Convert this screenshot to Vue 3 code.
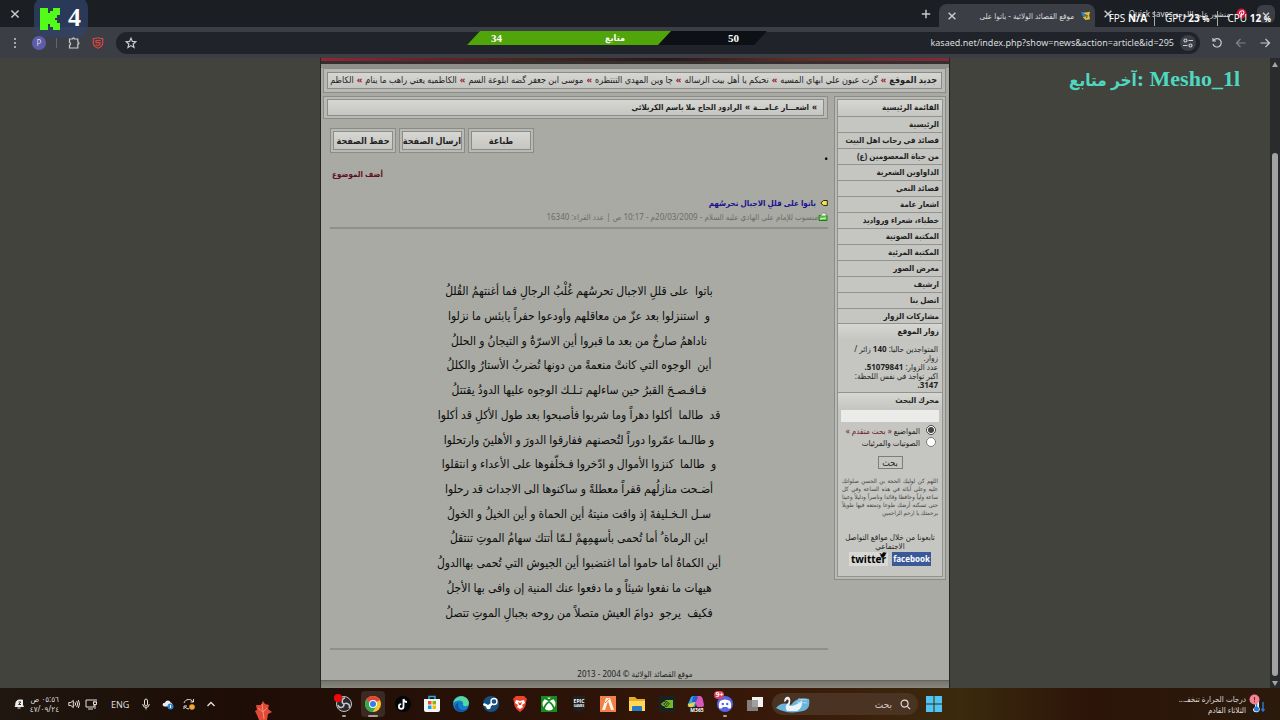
<template>
  <div class="desktop">
    <header class="browser">
      <div class="tab-bar">
        <button class="icon-btn window-close" aria-label="إغلاق النافذة">
          <svg viewBox="0 0 10 10"><path d="M2 2l6 6M8 2l-6 6" /></svg>
        </button>
        <button class="icon-btn new-tab" aria-label="علامة تبويب جديدة">
          <svg viewBox="0 0 10 10"><path d="M5 1.5v7M1.5 5h7" /></svg>
        </button>
        <div class="tab active">
          <button class="icon-btn" aria-label="إغلاق">
            <svg viewBox="0 0 10 10"><path d="M2.2 2.2l5.6 5.6M7.8 2.2l-5.6 5.6" /></svg>
          </button>
          <span class="tab-title" dir="rtl">موقع القصائد الولائية - باتوا على</span>
          <svg class="favicon" viewBox="0 0 12 12">
            <path d="M1 2l5 1 1 5-4-1z" fill="#2a84c8" />
            <path d="M4 3l7-1-1 4 1 4-5 1-3-3 4-1z" fill="#e8bd35" />
            <path d="M5 5l3 1-1 3" fill="none" stroke="#374626" />
          </svg>
        </div>
        <div class="tab">
          <button class="icon-btn" aria-label="إغلاق">
            <svg viewBox="0 0 10 10"><path d="M2.2 2.2l5.6 5.6M7.8 2.2l-5.6 5.6" /></svg>
          </button>
          <span class="tab-title" dir="rtl">منشور على اللوحة Quick saves</span>
          <svg class="favicon" viewBox="0 0 12 12">
            <circle cx="6" cy="6" r="5.5" fill="#d5143a" />
            <path d="M5 10l1.300-5M4.100 6.600C2.600 3.200 8.800 1.600 8.600 5c-.2 2.700-2.700 3-3 1.600" fill="none" stroke="#fff" stroke-width="1.100" />
          </svg>
        </div>
        <button class="icon-btn tab-search" aria-label="بحث في علامات التبويب">
          <svg viewBox="0 0 10 10"><path d="M2.500 4l2.500 2.500L7.500 4" /></svg>
        </button>
      </div>

      <div class="toolbar">
        <button class="icon-btn" aria-label="القائمة">
          <svg viewBox="0 0 12 12"><g fill="#c9cbce" stroke="none"><circle cx="6" cy="2" r="1" /><circle cx="6" cy="6" r="1" /><circle cx="6" cy="10" r="1" /></g></svg>
        </button>
        <button class="profile">P</button>
        <span class="divider"></span>
        <button class="icon-btn" aria-label="الإضافات">
          <svg viewBox="0 0 12 12"><path d="M1.500 2h3c0-1.500 2-1.500 2 0h3.300v3c1.500 0 1.500 2.200 0 2.200V11H1.500V8c1.500 0 1.500-2.500 0-2.500z" /></svg>
        </button>
        <button class="icon-btn shield" aria-label="مانع الإعلانات">
          <svg viewBox="0 0 12 12"><path d="M6 .8c2 .8 3.500 .8 4.700 .7v4.500c0 2.500-2 4-4.700 5.200C3.300 10 1.300 8.500 1.300 6V1.500C3 1.600 4.500 1.300 6 .8zM8.700 3.500H4v2.200h4c0 3-2 3-4.300 2" /></svg>
        </button>
        <div class="address">
          <button class="icon-btn" aria-label="إضافة إشارة">
            <svg viewBox="0 0 12 12"><path d="M6 1.200l1.400 3.200 3.400.3-2.600 2.300.8 3.400L6 8.600l-3 1.800.8-3.400-2.600-2.300 3.400-.3z" /></svg>
          </button>
          <input v-model="url" aria-label="العنوان" />
          <button class="icon-btn site-info" aria-label="معلومات الموقع">
            <svg viewBox="0 0 12 12"><circle cx="3.500" cy="3.500" r="1.500" /><path d="M6.500 3.500H11M1 8.500h4.500" /><circle cx="8.500" cy="8.500" r="1.500" /></svg>
          </button>
        </div>
        <button class="icon-btn nav" aria-label="إعادة تحميل">
          <svg viewBox="0 0 12 12"><path d="M2.500 3.500A4.200 4.200 0 1 1 2 7M2 1v3h3" /></svg>
        </button>
        <button class="icon-btn nav" aria-label="للأمام" disabled>
          <svg viewBox="0 0 12 12"><path d="M10.500 6h-9M5.500 2l-4 4 4 4" /></svg>
        </button>
        <button class="icon-btn nav" aria-label="للخلف">
          <svg viewBox="0 0 12 12"><path d="M1.500 6h9M6.500 2l4 4-4 4" /></svg>
        </button>
      </div>
    </header>

    <div class="viewport">
      <main class="site" dir="rtl">
        <div class="banner"></div>
        <div class="frame ticker">
          <div class="frame-inner">
            <strong>جديد الموقع</strong>
            <template v-for="item in news" :key="item">
              <b class="mark">»</b><a href="#">{{ item }}</a>
            </template>
          </div>
        </div>

        <div class="columns">
          <aside class="frame sidebar">
            <div class="sidebar-inner">
              <h2>القائمة الرئيسية</h2>
              <nav>
                <a v-for="item in menu" :key="item" href="#">{{ item }}</a>
              </nav>
              <h2>زوار الموقع</h2>
              <div class="stats">
                <p>المتواجدين حاليا: <b>140</b> زائر / زوار.</p>
                <p>عدد الزوار: <b>51079841.</b></p>
                <p>اكبر تواجد في نفس اللحظة: <b>3147.</b></p>
              </div>
              <h2>محرك البحث</h2>
              <form class="search" @submit.prevent>
                <input v-model="query" type="text" aria-label="محرك البحث" />
                <div class="choice">
                  <input id="topics" v-model="scope" type="radio" value="topics" />
                  <label for="topics">المواضيع <a href="#">« بحث متقدم »</a></label>
                </div>
                <div class="choice">
                  <input id="media" v-model="scope" type="radio" value="media" />
                  <label for="media">الصوتيات والمرئيات</label>
                </div>
                <button>بحث</button>
              </form>
              <p class="prayer">اللهم كن لوليك الحجة بن الحسن صلواتك عليه وعلى آبائه في هذه الساعة وفي كل ساعة ولياً وحافظا وقائدا وناصراً ودليلاً وعينا حتى تسكنه أرضك طوعا وتمتعه فيها طويلاً برحمتك يا ارحم الراحمين</p>
              <p class="follow">تابعونا من خلال مواقع التواصل الاجتماعي</p>
              <div class="social">
                <a href="#" class="facebook">facebook</a>
                <a href="#" class="twitter">twitter
                  <svg viewBox="0 0 10 8"><path d="M0 1l4 2c0-3 3-3 3.500-2L10 .5 8.500 3C8 6 5 8 1 7l2-1-2-2h1z" /></svg>
                </a>
              </div>
            </div>
          </aside>

          <section class="content">
            <div class="frame crumbs">
              <div class="frame-inner">
                <span>»</span> <a href="#">اشعـــار عـامـــة</a> <span>»</span> <a href="#">الرادود الحاج ملا باسم الكربلائي</a>
              </div>
            </div>
            <div class="actions">
              <button v-for="action in actions" :key="action"><span>{{ action }}</span></button>
            </div>
            <p class="dot">•</p>
            <a href="#" class="add-topic">أضف الموضوع</a>
            <article>
              <h1>
                <svg viewBox="0 0 8 8"><path d="M7.300 1.500H3.500L.8 4l2.700 2.500h3.800z" fill="#f2e34b" stroke="#302c10" /></svg>
                باتوا على قللِ الاجبال تحرسُهم
              </h1>
              <p class="meta">
                <svg viewBox="0 0 10 10"><path d="M1 3.500h8v5H1z" fill="#55cf42" stroke="#247a20" /><path d="M2.500 4l2-3h3l1 3z" fill="#f0f4df" stroke="#668453" stroke-width=".7" /><path d="M2 7l6-1" stroke="#d9ffc5" /></svg>
                <span>منسوب للإمام علي الهادي عليه السلام - 20/03/2009م - 10:17 ص | عدد القراء: 16340</span>
              </p>
              <hr />
              <div class="poem">
                <p v-for="line in poem" :key="line">{{ line }}</p>
              </div>
              <hr />
            </article>
          </section>
        </div>
        <footer>موقع القصائد الولائية © 2004 - 2013</footer>
        <div class="site-end"></div>
      </main>

      <div class="scrollbar">
        <span class="arrow up"></span>
        <span class="thumb"></span>
        <span class="arrow down"></span>
      </div>
      <p class="follower"><span>آخر متابع</span>: Mesho_1l</p>
    </div>

    <footer class="taskbar">
      <div class="tray">
        <svg class="tray-icon" viewBox="0 0 12 12"><path d="M2 8.500c1-1 .5-2 1-4C3.500 2.500 5 2 6.500 2h3v5l1 1.500zM4.500 10h3" fill="#eee" stroke="#eee" /><path d="M5.500 4h2.500l-2.500 2.500H8" stroke="#39301f" fill="none" /></svg>
        <div class="clock" dir="rtl"><span>٠٥:٥٦ ص</span><span>٤٧/٠٩/٢٤</span></div>
        <svg class="tray-icon" viewBox="0 0 12 12"><path d="M.8 4.500h2l2.500-2v7l-2.500-2h-2zM7 4.300q1.200 1.700 0 3.400M8.700 3q2 3 0 6M10.300 2q2.500 4 0 8" /></svg>
        <svg class="tray-icon net" viewBox="0 0 12 12"><path d="M8 2H1v7h8V7M3 11h5M9 1v3M11 1v3M8.500 4h3v2.500h-3zM10 6.500V11" /></svg>
        <span class="lang">ENG</span>
        <svg class="tray-icon mic" viewBox="0 0 12 12"><path d="M4.500 3q0-2 1.500-2t1.500 2v3q0 2-1.500 2T4.500 6zM2.700 6q.3 3.500 3.300 3.500T9.300 6M6 9.500v2" /></svg>
        <svg class="tray-icon cloud" viewBox="0 0 12 12"><path d="M2.500 8.500C-.5 8 .5 4.500 3 4.800 4 1.500 8 2 8.500 4.500 11 5 11 8.500 8.500 8.500z" fill="#ececec" stroke="none" /><circle cx="8.500" cy="8.500" r="3" fill="#2b86cf" stroke="none" /><path d="M8.500 7v3" stroke="#fff" /></svg>
        <svg class="tray-icon sync" viewBox="0 0 12 12"><path d="M1 5c1-4 7-5 9-1M10.500 1v3h-3M1 11V8h3M2 9q1.500 2 4 2" /><circle cx="9" cy="9" r="2.800" fill="#f4a82b" stroke="none" /></svg>
        <svg class="tray-icon" viewBox="0 0 12 12"><path d="M2.500 8L6 4.500 9.500 8" stroke-width="1.400" /></svg>
      </div>

      <svg class="leaf" viewBox="0 0 20 20"><path d="M3 5l5 0 2-4 2 3 4 1-1 4 4 3-4 2-1 6H6l-2-5-2-4 2-1z" fill="#e04b38" /><path d="M9 4l1 7 1 8M5 8l5 4 4-4" stroke="#ff8b77" fill="none" /></svg>

      <div class="dock">
        <div class="apps">
          <span v-for="app in apps" :key="app" class="app" :class="app">
            <svg v-if="app === 'obs'" viewBox="0 0 18 18"><circle cx="9" cy="9" r="7.500" fill="#29292b" stroke="#c5c5c8" /><path d="M9 9C6 8 7 3 10 3M9 9c3-2 7 1 5 4M9 9c0 4-5 5-6 1" fill="none" stroke="#c5c5c8" stroke-width="1.500" /><circle cx="3" cy="3" r="4" fill="#f00909" /></svg>
            <svg v-else-if="app === 'chrome'" viewBox="0 0 18 18"><circle cx="9" cy="9" r="8" fill="#f6c52e" /><path d="M9 9L2.100 5A8 8 0 0 1 15.900 5z" fill="#e64436" /><path d="M9 9L2.100 5A8 8 0 0 0 8.500 17l4-6z" fill="#32a650" /><circle cx="9" cy="9" r="4" fill="#fff" /><circle cx="9" cy="9" r="3" fill="#347fe6" /></svg>
            <svg v-else-if="app === 'tiktok'" viewBox="0 0 18 18"><circle cx="9" cy="9" r="8" fill="#030506" /><path d="M9.500 4v7.500a2.300 2.300 0 1 1-2.300-2.300M9.500 4q.5 3 3.500 3" fill="none" stroke="#f8f8f8" stroke-width="1.800" /></svg>
            <svg v-else-if="app === 'store'" viewBox="0 0 18 18"><path d="M6 4V1.500h6V4" fill="none" stroke="#2daae3" stroke-width="1.500" /><path d="M1 4h16v11q0 2-2 2H3q-2 0-2-2z" fill="#f2f5f7" /><path d="M5 6h3.500v3.500H5z" fill="#f25022" /><path d="M9.500 6H13v3.500H9.500z" fill="#7fba00" /><path d="M5 10.500h3.500V14H5z" fill="#00a4ef" /><path d="M9.500 10.500H13V14H9.500z" fill="#ffb900" /></svg>
            <svg v-else-if="app === 'edge'" viewBox="0 0 18 18"><circle cx="9" cy="9" r="8" fill="#147dcb" /><path d="M1.200 8C3-1 16-1 17 8c0 4-5 4-6 2 1-6-7-5-9.800-2z" fill="#54d7a0" /><path d="M7 8c-3 5 3 9 8 6-4 5-12 3-12-3 0-2 2-3 4-3z" fill="#10549e" /></svg>
            <svg v-else-if="app === 'steam'" viewBox="0 0 18 18"><circle cx="9" cy="9" r="8" fill="#155081" /><path d="M1.500 9l5 2.500L12 7" fill="none" stroke="#fff" stroke-width="2.500" /><circle cx="12" cy="6.500" r="3" fill="#155081" stroke="#fff" stroke-width="1.300" /><circle cx="6.500" cy="12" r="2.300" fill="#fff" /></svg>
            <svg v-else-if="app === 'brave'" viewBox="0 0 18 18"><path d="M5 1h8l3 3-1 3c0 5-3 8-6 10-3-2-6-5-6-10L2 4z" fill="#ec432b" /><path d="M5 5l4 1 4-1 1 3-3 2 1 2-3 2-3-2 1-2-3-2z" fill="#fff" /><path d="M7 7l2 1 2-1-1 3H8z" fill="#ec432b" /></svg>
            <svg v-else-if="app === 'xbox'" viewBox="0 0 18 18"><path d="M1 1h16v16H1z" fill="#178b20" /><circle cx="9" cy="9" r="6.500" fill="#fff" /><path d="M5 3.500q2 0 4 2 2-2 4-2M4 14q1-5 5-7 4 2 5 7" fill="none" stroke="#178b20" stroke-width="1.800" /></svg>
            <svg v-else-if="app === 'epic'" viewBox="0 0 18 18"><path d="M3 1h12v13l-6 3-6-3z" fill="#202124" /><text x="9" y="8" class="logo-text">EPIC</text><text x="9" y="12" class="logo-text tiny">GAMES</text></svg>
            <svg v-else-if="app === 'fivem'" viewBox="0 0 18 18"><path d="M1 1h16v16H1z" fill="#f28145" /><path d="M3 15l4-12h4l4 12h-3L9 6l-3 9z" fill="#fff4e8" /><path d="M6 8l4-4" stroke="#f28145" /></svg>
            <svg v-else-if="app === 'folder'" viewBox="0 0 18 18"><path d="M1 2h6l2 2h8v12H1z" fill="#e7aa25" /><path d="M1 6h16v10H1z" fill="#ffd857" /><path d="M4 12q0-1 1-1h8q1 0 1 1v4H4z" fill="#247cc4" /></svg>
            <svg v-else-if="app === 'nvidia'" viewBox="0 0 18 18"><path d="M1 1h16v16H1z" fill="#182223" /><path d="M7 5h8v8H7z" fill="#73b72a" /><path d="M2.500 9q5-6 9 0-5 6-9 0zm3 0q3-3 4 0-2 3-4 0z" fill="#73b72a" stroke="#182223" stroke-width=".8" /></svg>
            <svg v-else-if="app === 'm365'" viewBox="0 0 18 18"><path d="M4 2q1-1 3-1h4L8 12H2q-2 0-1-3z" fill="#26a8e6" /><path d="M9 1h4q2 0 3 4l1 5q0 2-2 2h-5L8 7z" fill="#d957bb" /><path d="M1 9q0 4 4 3 2 0 3-5z" fill="#efcf47" /><path d="M6 2q3-2 5 0L9 7H5z" fill="#275dce" /><text x="10" y="17" class="logo-text">M365</text></svg>
            <svg v-else-if="app === 'discord'" viewBox="0 0 18 18"><circle cx="9" cy="9" r="8" fill="#5865e9" /><path d="M4 6q5-3 10 0 2 3 1 7-2 1-3 0l-1-1H7l-1 1q-1 1-3 0-1-4 1-7z" fill="#fff" /><circle cx="6.800" cy="9" r="1.200" fill="#5865e9" /><circle cx="11.200" cy="9" r="1.200" fill="#5865e9" /></svg>
            <svg v-else viewBox="0 0 18 18"><path d="M6 2h11v10H6z" fill="#f2f2f2" /><path d="M1 5h11v11H1z" fill="#929292" fill-opacity=".85" /></svg>
            <i v-if="app === 'discord'" class="badge">9+</i>
          </span>
        </div>
        <label class="task-search">
          <svg class="swan" viewBox="0 0 36 20"><path d="M1 14q6-7 15-3Q22 2 34 5q2 10-6 12-15 4-27-3z" fill="#69b5dc" /><path d="M12 17q-3-5 1-8c2-3-1-5-2-2l-2 1c0-7 8-7 6 1l-1 3q8 0 13-6 1 8-5 11z" fill="#edf1fa" /><path d="M23 5l9 1M22 8l10 1" stroke="#bdd4ed" /></svg>
          <input type="text" placeholder="بحث" dir="rtl" />
          <svg class="lens" viewBox="0 0 12 12"><circle cx="5" cy="5" r="3.800" /><path d="M8 8l3 3" /></svg>
        </label>
        <svg class="windows" viewBox="0 0 16 16"><path d="M0 0h7.500v7.500H0zM8.500 0H16v7.500H8.500zM0 8.500h7.500V16H0zM8.500 8.500H16V16H8.500z" fill="#50c4f2" /></svg>
      </div>

      <div class="weather">
        <div dir="rtl"><span>درجات الحرارة تنخفـ...</span><span>الثلاثاء القادم</span></div>
        <svg viewBox="0 0 18 20"><path d="M7 7q2-2 4 0v6q2 3-1 5-5 1-5-3l2-2z" fill="#eaf3ff" /><circle cx="8.500" cy="15" r="2.500" fill="#267bda" /><path d="M8.500 15V9M15 8v9M13.500 15l1.500 2 1.500-2" stroke="#267bda" fill="none" stroke-width="1.400" /><circle cx="6.500" cy="5.500" r="5" fill="#f58293" /><path d="M6.500 3v3.300M6.500 7.300v1" stroke="#5c2831" /></svg>
      </div>
    </footer>

    <div class="kick">
      <svg viewBox="0 0 20 22"><path d="M0 0h8v5h2V3h3V0h7v7h-3v3h-2v2h2v3h3v7h-7v-3h-3v-3H8v6H0z" fill="#53fc18" /></svg>
      <b>4</b>
    </div>
    <div class="goal">
      <div class="goal-fill" :style="{ width: fillWidth }"></div>
      <b>{{ goal.now }}</b><b class="goal-name">متابع</b><b>{{ goal.target }}</b>
    </div>
    <div class="perf">
      <span>FPS <b>N/A</b></span><span>GPU <b>23</b> <small>%</small></span><span>CPU <b>12</b> <small>%</small></span>
    </div>
  </div>
</template>

<script setup>
import { ref, computed } from 'vue'

const url = ref('kasaed.net/index.php?show=news&action=article&id=295')
const query = ref('')
const scope = ref('topics')

const goal = ref({ now: 34, target: 50 })
const fillWidth = computed(() => `${(goal.value.now / goal.value.target) * 100}%`)

const news = [
  'گرت عيون علي ابهاي المسيه',
  'نحبكم يا أهل بيت الرساله',
  'چا وين المهدي التنتظره',
  'موسى ابن جعفر گضه ابلوعة السم',
  'الكاظميه يعني راهب ما ينام',
  'الكاظم'
]

const menu = [
  'الرئيسية',
  'قصائد في رحاب اهل البيت',
  'من حياة المعصومين (ع)',
  'الداواوين الشعرية',
  'قصائد النعي',
  'اشعار عامة',
  'خطباء، شعراء ورواديد',
  'المكتبة الصوتية',
  'المكتبة المرئية',
  'معرض الصور',
  'ارشيف',
  'اتصل بنا',
  'مشاركات الزوار'
]

const actions = ['طباعة', 'ارسال الصفحة', 'حفظ الصفحة']

const poem = [
  'باتوا  على قللِ الاجبال تحرسُهم غُلْبُ الرجالِ فما أغنتهمُ القُللُ',
  'و  استنزلوا بعد عزّ من معاقلهم وأودعوا حفراً يابئس ما نزلوا',
  'ناداهمُ صارخٌ من بعد ما قبروا أين الاسرّةُ و التيجانُ و الحللُ',
  'أين  الوجوه التي كانتْ منعمةً من دونها تُضربُ الأستارُ والكللُ',
  'فـافـصـحَ القبرُ حين ساءلهم تـلـك الوجوه عليها الدودُ يقتتلُ',
  'قد  طالما  أكلوا دهراً وما شربوا فأصبحوا بعد طول الأكلِ قد أكلوا',
  'و طالـما عمّروا دوراً لتُحصنهم ففارقوا الدورَ و الأهلينَ وارتحلوا',
  'و  طالما  كنزوا الأموال و ادّخروا فـخلّفوها على الأعداء و انتقلوا',
  'أضـحت منازلُهم قفراً معطلةً و ساكنوها الى الاجداث قد رحلوا',
  'سـل الـخـليفةَ إذ وافت منيتهُ أين الحماة و أين الخيلُ و الخولُ',
  'اين الرماة ُ أما تُحمى بأسهمِهمْ لـمّا أتتك سهامُ الموتِ تنتقلُ',
  'أين الكماةُ أما حاموا أما اغتضبوا أين الجيوش التي تُحمى بهاالدولُ',
  'هيهات ما نفعوا شيئاً و ما دفعوا عنك المنية إن وافى بها الأجلُ',
  'فكيف  يرجو  دوامَ العيش متصلاً من روحه بجبالِ الموتِ تتصلُ'
]

const apps = ['obs', 'chrome', 'tiktok', 'store', 'edge', 'steam', 'brave', 'xbox', 'epic', 'fivem', 'folder', 'nvidia', 'm365', 'discord', 'tasks']
</script>

<style>
body {
  margin: 0;
  background: #42433d;
}
</style>

<style scoped>
* {
  box-sizing: border-box;
}

.desktop {
  position: relative;
  display: flex;
  flex-direction: column;
  height: 100vh;
  overflow: hidden;
  font-family: "Noto Sans", "DejaVu Sans Condensed", "DejaVu Sans", sans-serif;
  font-size: 10px;
  color: #ddd;
}

p, h1, h2 {
  margin: 0;
}

button, input {
  font: inherit;
  color: inherit;
  margin: 0;
  padding: 0;
  border: 0;
  background: none;
}

a {
  color: inherit;
  text-decoration: none;
}

svg {
  flex: none;
}

/* browser window */
.tab-bar {
  display: flex;
  align-items: center;
  height: 27px;
  padding: 0 5px 0 8px;
  background: #1b1f24;
}

.icon-btn {
  display: flex;
  align-items: center;
  justify-content: center;
  flex: none;
  width: 14px;
  height: 14px;
}

.icon-btn svg {
  width: 12px;
  height: 12px;
  fill: none;
  stroke: #c9cbce;
  stroke-width: 1.2;
}

.new-tab {
  margin-left: auto;
  margin-right: 6px;
}

.tab {
  display: flex;
  align-items: center;
  gap: 6px;
  width: 156px;
  padding: 0 4px 0 6px;
}

.tab.active {
  align-self: flex-end;
  height: 23px;
  border-radius: 8px 8px 0 0;
  background: #3b3e45;
}

.tab-title {
  flex: 1;
  white-space: nowrap;
  font-size: 8px;
}

.favicon {
  width: 11px;
  height: 11px;
}

.tab-search {
  width: 18px;
  height: 18px;
  margin-left: 6px;
  border-radius: 6px;
  background: #3b3e45;
}

.toolbar {
  display: flex;
  align-items: center;
  gap: 10px;
  height: 31px;
  padding: 0 8px;
  background: #3b3e45;
}

.profile {
  width: 14px;
  height: 14px;
  border-radius: 50%;
  background: #5e5cab;
  font-size: 8px;
}

.divider {
  width: 1px;
  height: 10px;
  background: #62656b;
}

.shield svg {
  stroke: #d8483f;
}

.address {
  display: flex;
  align-items: center;
  flex: 1;
  height: 22px;
  margin-left: 1px;
  padding: 0 4px 0 8px;
  border-radius: 11px;
  background: #20242a;
}

.address input {
  flex: 1;
  min-width: 0;
  padding-right: 6px;
  font-size: 9px;
  text-align: right;
  outline: 0;
}

.site-info {
  width: 16px;
  height: 16px;
  border-radius: 50%;
  background: #3b3e45;
}

.nav:disabled {
  opacity: .5;
}

/* page */
.viewport {
  position: relative;
  display: flex;
  flex: 1;
  min-height: 0;
  overflow: hidden;
  background: #42433d;
}

.site {
  width: 630px;
  margin: 0 auto;
  border: solid #252622;
  border-width: 0 1px;
  background: #a9aaa4;
  color: #222;
  font-size: 8px;
}

.banner {
  height: 10px;
  border-bottom: 4px solid #8f908b;
  background: linear-gradient(90deg, #8f2835, #672029 18%, #43271b 35%, #28191b 55%, #622b24 75%, #812a38) 0 0 / 100% 3px no-repeat #34302f;
}

.frame {
  padding: 3px;
  border: 1px solid #8b8c87;
  background: #b9bab5;
}

.frame-inner {
  display: flex;
  align-items: center;
  border: 1px solid #8b8c87;
  background: linear-gradient(#d6d6d3, #c5c5c1);
}

.ticker {
  margin: 0 3px 3px 2px;
}

.ticker .frame-inner {
  gap: 3px;
  height: 17px;
  padding: 0 4px 2px 0;
  overflow: hidden;
  font-size: 9px;
  white-space: nowrap;
}

.mark {
  color: #971c31;
}

.columns {
  display: flex;
  align-items: flex-start;
  gap: 6px;
  padding: 0 3px 0 2px;
}

.sidebar {
  flex: none;
  width: 112px;
  padding: 2px;
}

.sidebar-inner {
  border: 1px solid #92938e;
  background: #c5c6c1;
}

.sidebar h2 {
  height: 16px;
  padding: 0 3px;
  background: linear-gradient(#d6d6d3, #c5c5c1);
  font-size: 8px;
  line-height: 14px;
}

.sidebar nav a {
  display: block;
  height: 16px;
  padding: 0 3px;
  border-top: 1px solid #92938e;
  font-weight: bold;
  line-height: 13px;
  white-space: nowrap;
}

.sidebar nav a:last-child {
  border-bottom: 1px solid #92938e;
}

.stats {
  height: 53px;
  padding: 4px;
  border-bottom: 1px solid #92938e;
  line-height: 9px;
}

.search {
  display: flex;
  flex-direction: column;
  padding: 0 3px;
}

.search input[type="text"] {
  height: 12px;
  margin: 1px 0 2px;
  background: #ebebe9;
}

.choice {
  display: flex;
  align-items: center;
  gap: 6px;
  height: 12px;
  padding-right: 3px;
  white-space: nowrap;
}

.choice input {
  flex: none;
  width: 10px;
  height: 10px;
  accent-color: #444;
}

.choice a {
  color: #6b1a2a;
}

.search button {
  align-self: center;
  width: 25px;
  height: 13px;
  margin: 8px 0;
  border: 1px solid #7d7e7a;
  font-size: 9px;
  line-height: 10px;
}

.prayer {
  height: 48px;
  padding: 0 4px;
  color: #444;
  font-size: 6px;
  line-height: 8px;
  text-align: justify;
}

.follow {
  margin: 7px 0 2px;
  padding: 0 2px;
  line-height: 9px;
  text-align: center;
}

.social {
  display: flex;
  justify-content: center;
  gap: 4px;
  padding-bottom: 10px;
}

.social a {
  position: relative;
  width: 39px;
  height: 14px;
  font: bold 8px/14px "Open Sans", sans-serif;
  text-align: center;
}

.facebook {
  background: #3b5998;
  color: #fff;
}

.social .twitter {
  background: #d8d8d5;
  color: #000;
  font-size: 10px;
}

.twitter svg {
  position: absolute;
  top: 0;
  right: 1px;
  width: 8px;
  height: 6px;
}

.content {
  flex: 1;
  min-width: 0;
}

.crumbs {
  padding: 2px 3px;
}

.crumbs .frame-inner {
  gap: 3px;
  height: 17px;
  padding: 0 6px 2px;
  font-weight: bold;
}

.actions {
  display: flex;
  justify-content: flex-end;
  gap: 3px;
  padding: 9px 0 0 7px;
}

.actions button {
  width: 66px;
  height: 25px;
  padding: 2px;
  border: 1px solid #8b8c87;
  background: #b9bab5;
  font-size: 9px;
  font-weight: bold;
  white-space: nowrap;
}

.actions button span {
  display: block;
  border: 1px solid #8b8c87;
  background: linear-gradient(#d6d6d3, #c5c5c1);
  line-height: 17px;
}

.dot {
  height: 14px;
  color: #000;
  font-size: 10px;
  line-height: 12px;
}

.add-topic {
  display: block;
  padding-left: 9px;
  color: #5d1020;
  font-weight: bold;
  line-height: 14px;
  text-align: left;
}

article {
  padding: 15px 0 0 7px;
}

h1 {
  display: flex;
  align-items: center;
  gap: 4px;
  color: #1b0f8f;
  font-size: 8px;
  line-height: 14px;
}

h1 svg {
  width: 8px;
  height: 8px;
}

.meta {
  display: flex;
  align-items: center;
  color: #6b6c68;
  line-height: 14px;
}

.meta svg {
  width: 10px;
  height: 10px;
}

hr {
  height: 2px;
  margin: 3px 0 0;
  border: 0;
  background: #8f908b;
}

.poem {
  display: grid;
  grid-auto-rows: 1fr;
  align-items: center;
  min-height: 346px;
  margin: 50px 0 23px;
  color: #0d0d0d;
  font-size: 12px;
  line-height: 20px;
  text-align: center;
  white-space: pre;
}

.site > footer {
  height: 13px;
  margin-top: 18px;
  border-bottom: 1px solid #63645f;
  line-height: 12px;
  text-align: center;
}

.site-end {
  height: 8px;
  background: linear-gradient(#75756d, #8b8b82);
}

.scrollbar {
  display: flex;
  flex-direction: column;
  align-items: center;
  width: 10px;
  padding: 4px 0 2px;
  background: #2a2b2c;
}

.arrow {
  border: 3px solid transparent;
}

.up {
  border-top: 0;
  border-bottom: 5px solid #a5a5a5;
}

.down {
  border-bottom: 0;
  border-top: 5px solid #a5a5a5;
}

.thumb {
  flex: 1;
  width: 6px;
  margin: 86px 0 5px;
  border-radius: 3px;
  background: #a2a2a2;
}

.follower {
  position: absolute;
  top: 6px;
  right: 40px;
  color: #4fd8c0;
  font: bold 22px/30px "Liberation Serif", "DejaVu Sans Condensed", serif;
}

.follower span {
  font-size: 17px;
}

/* taskbar */
.taskbar {
  position: relative;
  display: grid;
  grid-template-columns: 1fr auto 1fr;
  align-items: center;
  height: 32px;
  background: linear-gradient(90deg, #1f1710, #1d0d06 18%, #2c1308 45%, #3a1a09 62%, #3b2a0e 75%, #2c1408 85%, #2a1a0c);
}

.tray {
  display: flex;
  align-items: center;
  padding-left: 13px;
}

.tray-icon {
  width: 12px;
  height: 12px;
  fill: none;
  stroke: #e4e0dc;
}

.clock {
  display: flex;
  flex-direction: column;
  width: 34px;
  margin: 0 9px 0 0;
  font-size: 8px;
  line-height: 10px;
}

.net {
  margin-left: 5px;
}

.lang {
  margin: 0 11px 0 14px;
  font-size: 9px;
}

.mic {
  margin-right: 10px;
}

.cloud {
  margin-right: 9px;
}

.sync {
  margin-right: 10px;
}

.leaf {
  position: absolute;
  bottom: 0;
  left: 253px;
  width: 20px;
  height: 20px;
}

.dock {
  display: flex;
  align-items: center;
  gap: 5px;
  margin-right: 6px;
}

.apps {
  display: flex;
  justify-content: space-between;
  flex: 0 0 435px;
}

.app {
  position: relative;
  display: flex;
  align-items: center;
  justify-content: center;
  width: 24px;
  height: 26px;
  border-radius: 4px;
}

.app svg {
  width: 18px;
  height: 18px;
  overflow: visible;
}

.app.chrome {
  background: #3a2a21;
}

.app.chrome::after,
.app.obs::after,
.app.discord::after {
  content: "";
  position: absolute;
  bottom: 0;
  left: 10px;
  width: 4px;
  height: 2px;
  border-radius: 1px;
  background: #a89e98;
}

.app.chrome::after {
  left: 7px;
  width: 10px;
}

.logo-text {
  fill: #fff;
  font: bold 5px "Open Sans", sans-serif;
  text-anchor: middle;
}

.tiny {
  font-size: 3px;
}

.badge {
  position: absolute;
  top: 0;
  left: 1px;
  padding: 0 1px;
  border-radius: 4px;
  background: #d9435a;
  color: #fff;
  font: bold 7px/8px "Open Sans", sans-serif;
}

.task-search {
  display: flex;
  align-items: center;
  width: 146px;
  height: 22px;
  padding: 0 7px 0 3px;
  border-radius: 11px;
  background: #4b3324;
}

.swan {
  width: 36px;
  height: 20px;
}

.task-search input {
  flex: 1;
  min-width: 0;
  padding-right: 8px;
  outline: 0;
}

.task-search input::placeholder {
  color: #cfc4bc;
}

.lens {
  width: 11px;
  height: 11px;
  fill: none;
  stroke: #e4e0dc;
  stroke-width: 1.3;
}

.windows {
  width: 16px;
  height: 16px;
  margin-left: 3px;
}

.weather {
  display: flex;
  align-items: center;
  justify-content: flex-end;
  gap: 2px;
  padding-right: 14px;
  font-size: 8px;
  line-height: 11px;
}

.weather span {
  display: block;
  white-space: nowrap;
}

.weather svg {
  width: 18px;
  height: 20px;
}

/* stream overlays */
.kick {
  position: absolute;
  top: -4px;
  left: 34px;
  display: flex;
  align-items: flex-end;
  gap: 8px;
  width: 54px;
  height: 41px;
  padding: 0 6px 6px;
  border-radius: 12px;
  background: rgba(50, 67, 105, .75);
  color: #fff;
  font: bold 26px/27px "Liberation Serif", serif;
}

.kick svg {
  width: 20px;
  height: 22px;
  margin-bottom: 1px;
}

.goal {
  position: absolute;
  top: 31px;
  left: 467px;
  display: flex;
  align-items: center;
  justify-content: space-between;
  width: 300px;
  height: 14px;
  padding: 0 28px 0 24px;
  background: #0d1014;
  clip-path: polygon(13px 0, 100% 0, 287px 100%, 0 100%);
  color: #fff;
  font: bold 11px/14px "Liberation Serif", "DejaVu Sans Condensed", serif;
}

.goal-fill {
  position: absolute;
  inset: 0 auto 0 0;
  background: #4fa50a;
  clip-path: polygon(0 0, 100% 0, calc(100% - 13px) 100%, 0 100%);
}

.goal b {
  position: relative;
}

.goal .goal-name {
  font-size: 9px;
}

.perf {
  position: absolute;
  top: 11px;
  right: 9px;
  display: flex;
  color: #fff;
  font: 10px/14px "Open Sans", sans-serif;
}

.perf span + span {
  margin-left: 7px;
  padding-left: 10px;
  border-left: 1px solid #aaa;
}

.perf small {
  font-size: 8px;
  font-weight: bold;
}
</style>
